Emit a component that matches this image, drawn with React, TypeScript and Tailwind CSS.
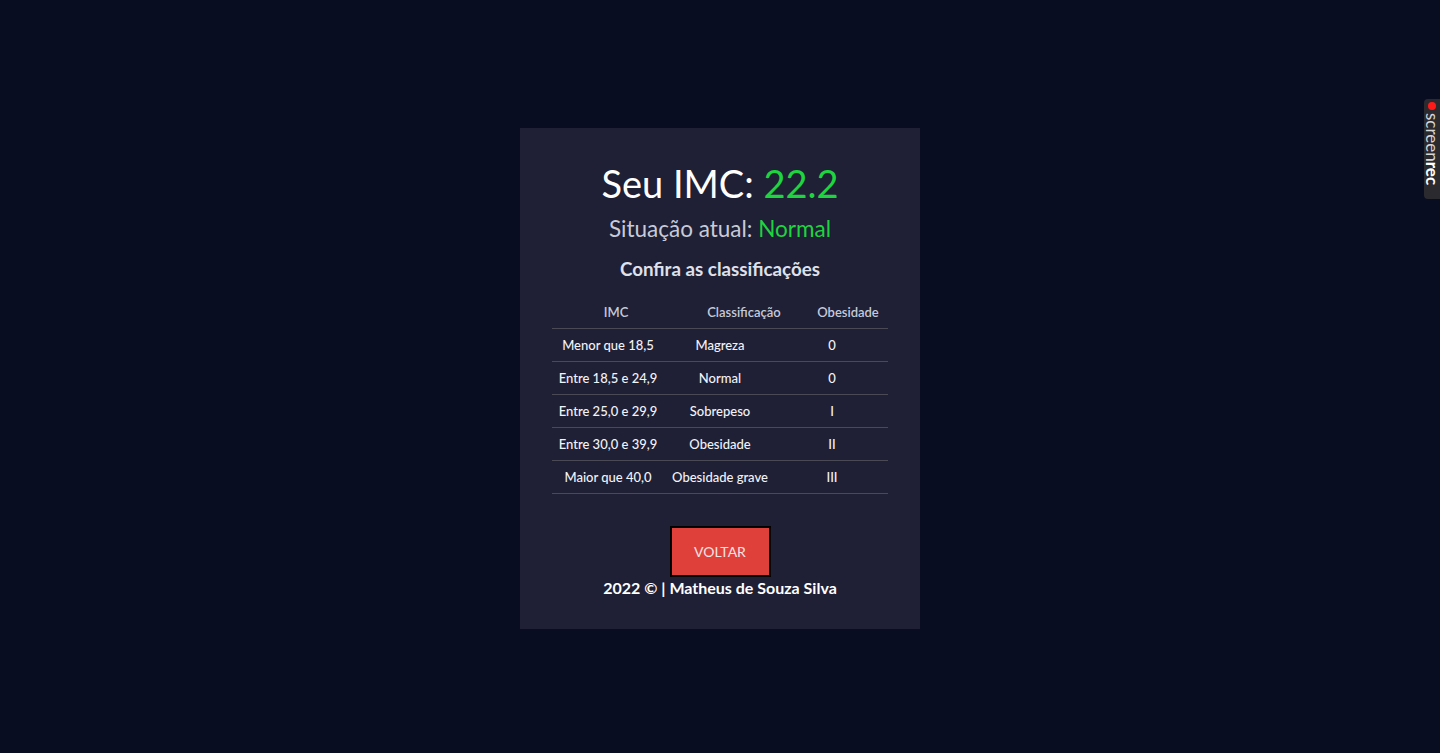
import React from "react";

const rows = [
  ["Menor que 18,5", "Magreza", "0"],
  ["Entre 18,5 e 24,9", "Normal", "0"],
  ["Entre 25,0 e 29,9", "Sobrepeso", "I"],
  ["Entre 30,0 e 39,9", "Obesidade", "II"],
  ["Maior que 40,0", "Obesidade grave", "III"],
];

export default function App() {
  return (
    <div
      className="relative h-[753px] w-full bg-[#080d22] flex justify-center pt-[128px]"
      style={{ fontFamily: "Lato, 'Noto Sans', sans-serif" }}
    >
      <div className="w-[400px] h-[501px] bg-[#1f1f36] px-8 pt-[31px] pb-[29px] flex flex-col items-center">
        <h1 className="text-[38px] leading-[48px] text-white font-normal">
          Seu IMC: <span className="text-[#1ed43f]">22.2</span>
        </h1>
        <h2 className="mt-[8px] text-[22.5px] leading-[28px] text-[#c8cbd6] font-normal">
          Situação atual: <span className="text-[#1ed43f]">Normal</span>
        </h2>
        <h3 className="mt-[14px] text-[18.75px] leading-[24px] font-bold text-[#dfe1ea]">
          Confira as classificações
        </h3>
        <div className="mt-[15px] w-[336px] text-[13px]">
          <div className="grid grid-cols-[128px_128px_80px] h-[33px] pt-[2px] items-center border-b border-[#4a4a55] text-[#c6cad8] font-semibold">
            <div className="text-center">IMC</div>
            <div className="text-center">Classificação</div>
            <div className="text-center">Obesidade</div>
          </div>
          {rows.map((r) => (
            <div
              key={r[0]}
              className="grid grid-cols-[112px_112px_112px] h-[33px] pt-[2px] items-center border-b border-[#4a4a55] text-[#f2f3f7] font-medium"
            >
              <div className="text-center whitespace-nowrap">{r[0]}</div>
              <div className="text-center whitespace-nowrap">{r[1]}</div>
              <div className="text-center whitespace-nowrap">{r[2]}</div>
            </div>
          ))}
        </div>
        <button className="mt-[32px] h-[51px] w-[101px] border-2 border-black bg-[#e0403a] text-[14px] text-[#f3e3e6]">
          VOLTAR
        </button>
        <p className="-mt-[1px] text-[16px] leading-[24px] font-bold text-white">
          2022 © | Matheus de Souza Silva
        </p>
      </div>

      <div className="absolute right-0 top-[99px] w-[16px] h-[100px] rounded-l-[4px] bg-[#2b2b2f] flex flex-col items-center pt-[2px]">
        <div className="w-[8px] h-[8px] rounded-full bg-[#ff1a1a] mt-[1px]" />
        <div
          className="mt-[3px] text-[17px] leading-[16px] text-[#d6d6d6]"
          style={{ writingMode: "vertical-rl" }}
        >
          screen<span className="font-bold text-white">rec</span>
        </div>
      </div>
    </div>
  );
}
